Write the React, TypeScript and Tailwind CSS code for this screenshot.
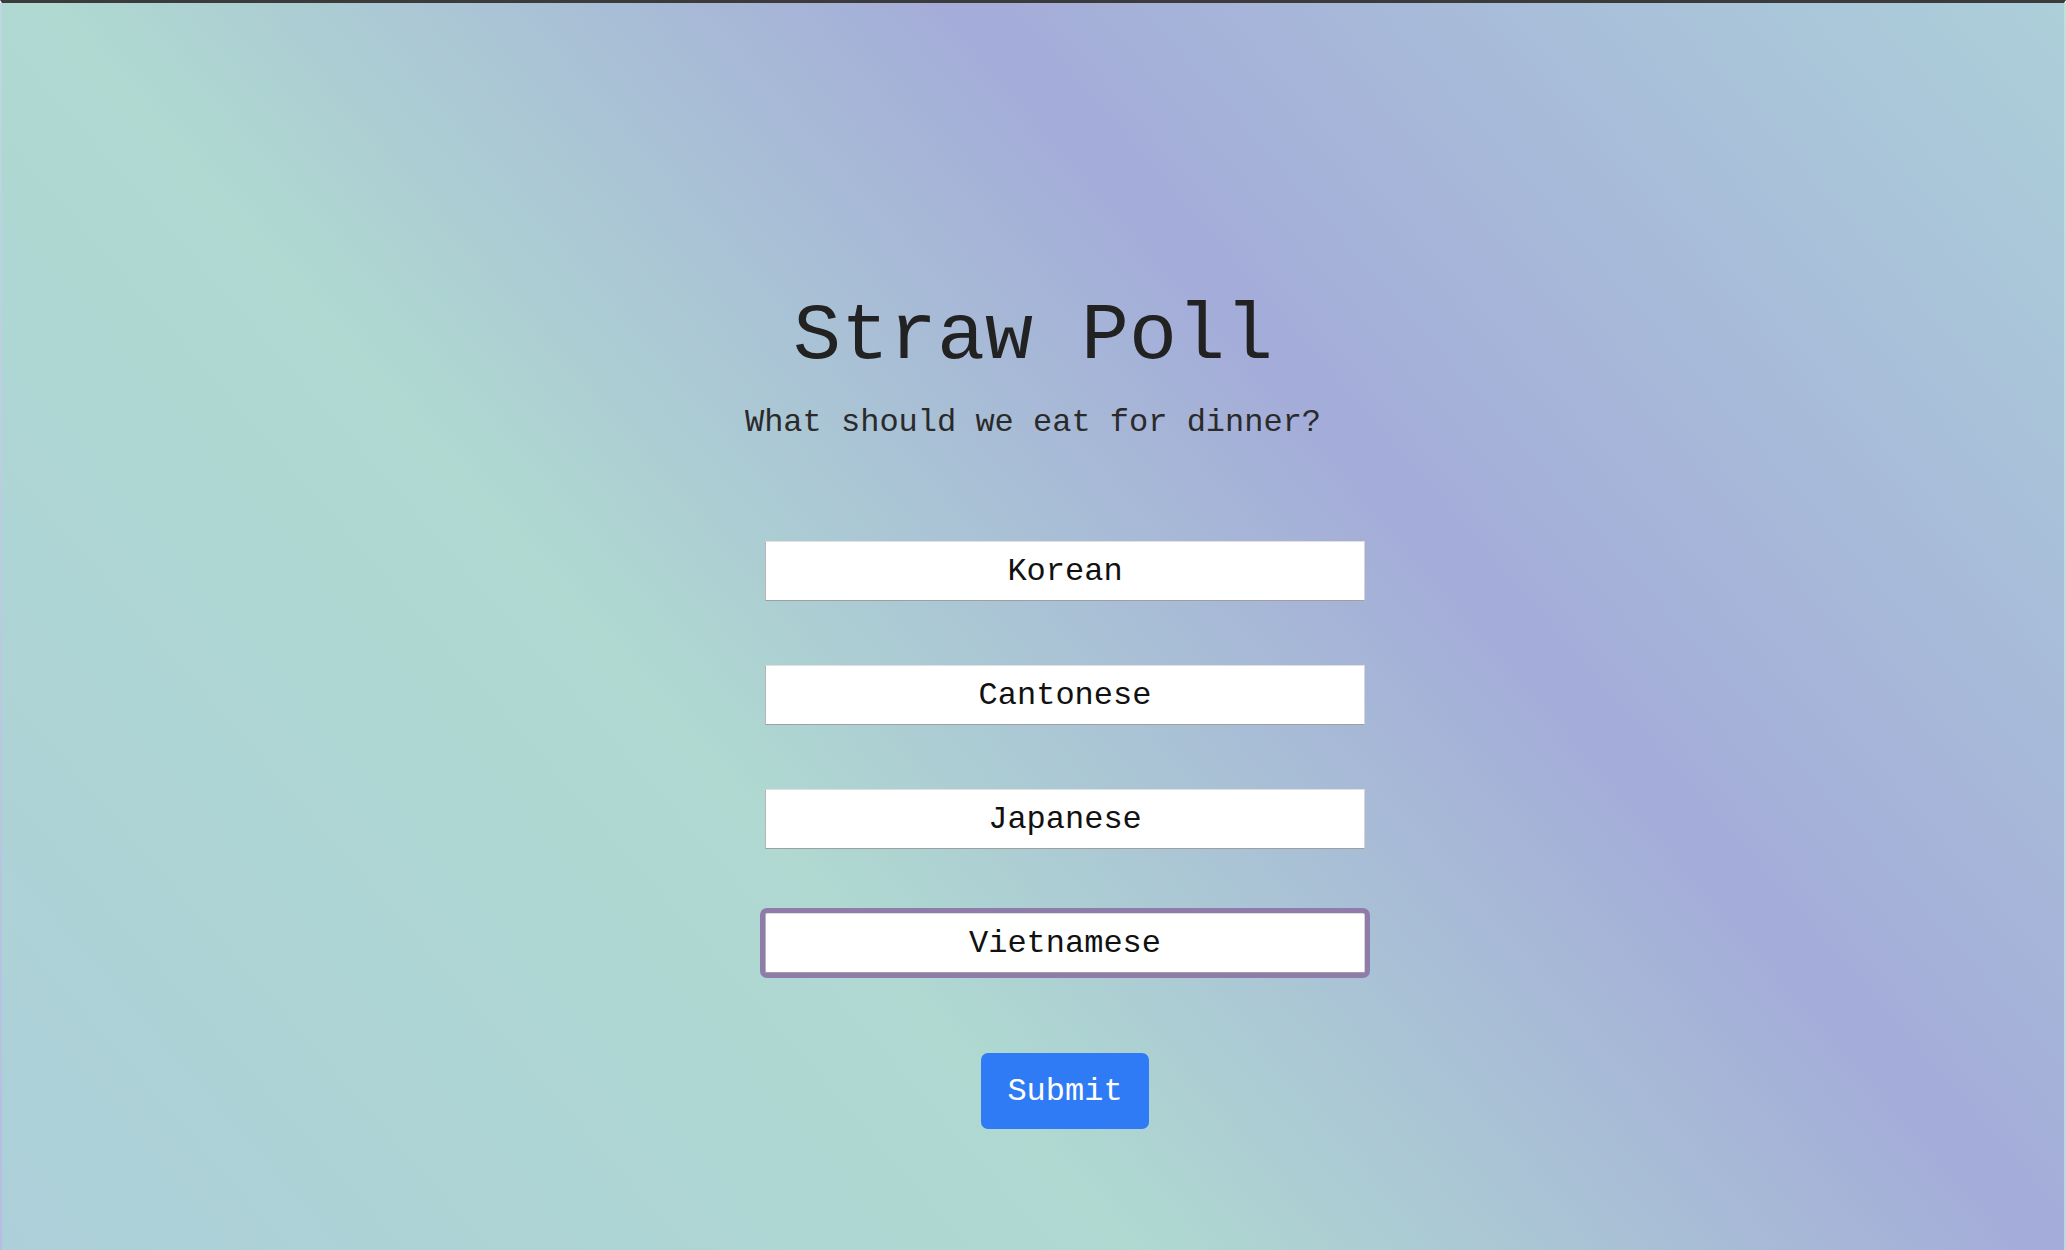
// Straw poll page
import { FC } from "react";

const options = ["Korean", "Cantonese", "Japanese", "Vietnamese"];

const App: FC = () => {
  return (
    <div className="h-[1250px] w-full overflow-hidden border-t-[3px] border-x-2 border-t-[#3b3b3b] border-x-white/20 bg-[linear-gradient(49deg,#accfd9_0%,#afd9d1_36%,#a4acd9_65%,#accfd9_100%)] font-['Liberation_Mono','Courier_New',monospace] text-[#222]">
      <div className="flex flex-col items-center pt-[294px]">
        <h1 className="text-[80px] leading-none">Straw Poll</h1>
        <p className="mt-[30px] text-[32px] leading-none text-[#2a2a2a]">
          What should we eat for dinner?
        </p>

        {/* Options */}
        <form className="mt-[102px] flex flex-col items-center pl-16">
          {options.map((opt, i) => (
            <input
              key={opt}
              readOnly
              value={opt}
              className={`h-[60px] w-[600px] border border-t-[#e0e0e0] border-l-[#b5b5b5] border-r-[#d5d5d5] border-b-[#9f9f9f] bg-white text-center text-[32px] text-[#111] ${
                i > 0 ? "mt-16" : ""
              } ${
                i === 3
                  ? "rounded-[2px] outline-[5px] outline-solid outline-[#907caa]"
                  : "outline-none"
              }`}
            />
          ))}
          <button
            type="button"
            className="mt-20 h-[76px] w-[168px] rounded-[7px] bg-[#2f7bf5] pt-[2px] text-[32px] text-white"
          >
            Submit
          </button>
        </form>
      </div>
    </div>
  );
};

export default App;
